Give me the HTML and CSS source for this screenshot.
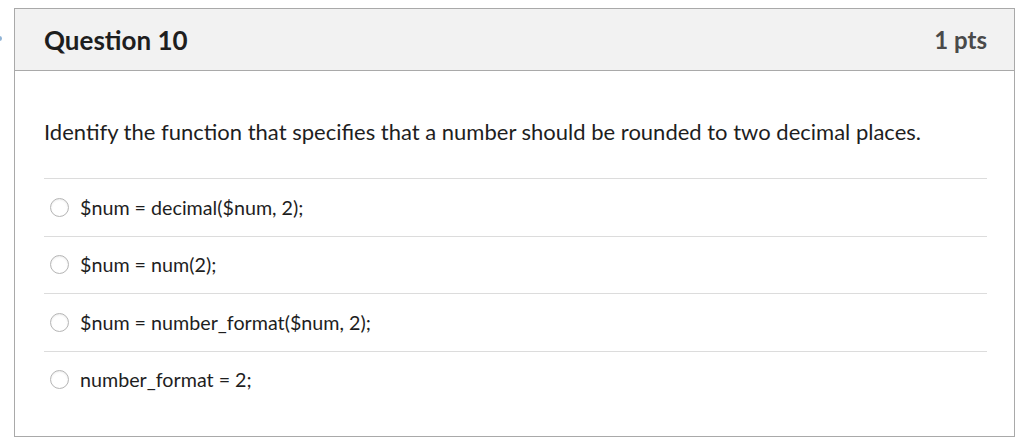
FILE: index.html
```html
<!DOCTYPE html>
<html>
<head>
<meta charset="utf-8">
<link rel="stylesheet" href="styles.css">
</head>
<body>
<span class="edge-dot"></span>
<div class="question">
  <div class="q-header">
    <h2 class="q-title">Question 10</h2>
    <span class="q-points">1 pts</span>
  </div>
  <div class="q-body">
    <p class="q-text">Identify the function that specifies that a number should be rounded to two decimal places.</p>
    <div class="answers">
      <label class="answer"><span class="radio"></span><span class="answer-text">$num = decimal($num, 2);</span></label>
      <label class="answer"><span class="radio"></span><span class="answer-text">$num = num(2);</span></label>
      <label class="answer"><span class="radio"></span><span class="answer-text">$num = number_format($num, 2);</span></label>
      <label class="answer"><span class="radio"></span><span class="answer-text">number_format = 2;</span></label>
    </div>
  </div>
</div>
</body>
</html>
```

FILE: styles.css
```css
html, body {
  margin: 0;
  background: #ffffff;
}
body {
  padding: 8px 9px 0 14px;
  font-family: Lato, "Open Sans", "Liberation Sans", sans-serif;
  color: #2d2d2d;
  position: relative;
}
.edge-dot {
  position: absolute;
  left: -3px;
  top: 36px;
  width: 5px;
  height: 5px;
  border-radius: 50%;
  background: #8fb3d6;
}
.question {
  width: 999px;
  border: 1px solid #a9a9a9;
  background: #fff;
}
.q-header {
  display: flex;
  align-items: center;
  justify-content: space-between;
  height: 61px;
  padding: 0 27px 0 29px;
  background: #f2f2f2;
  border-bottom: 1px solid #a9a9a9;
}
.q-title {
  margin: 0;
  font-size: 26px;
  font-weight: 700;
  color: #1e1e1e;
}
.q-points {
  font-size: 24px;
  font-weight: 700;
  color: #4a4a4a;
}
.q-body {
  padding: 47px 27px 28px 29px;
}
.q-text {
  margin: 0 0 32px;
  font-size: 22px;
  line-height: 28px;
  color: #1e1e1e;
}
.answer {
  display: flex;
  align-items: center;
  height: 56.5px;
  border-top: 1px solid #dcdcdc;
  padding-left: 6px;
  font-size: 19.7px;
  color: #1e1e1e;
}
.radio {
  width: 17px;
  height: 17px;
  border: 1px solid #b5b5b5;
  border-radius: 50%;
  background: #fff;
  box-shadow: inset 0 1px 2px rgba(0,0,0,0.08);
  margin-right: 11px;
  flex: none;
}
```
